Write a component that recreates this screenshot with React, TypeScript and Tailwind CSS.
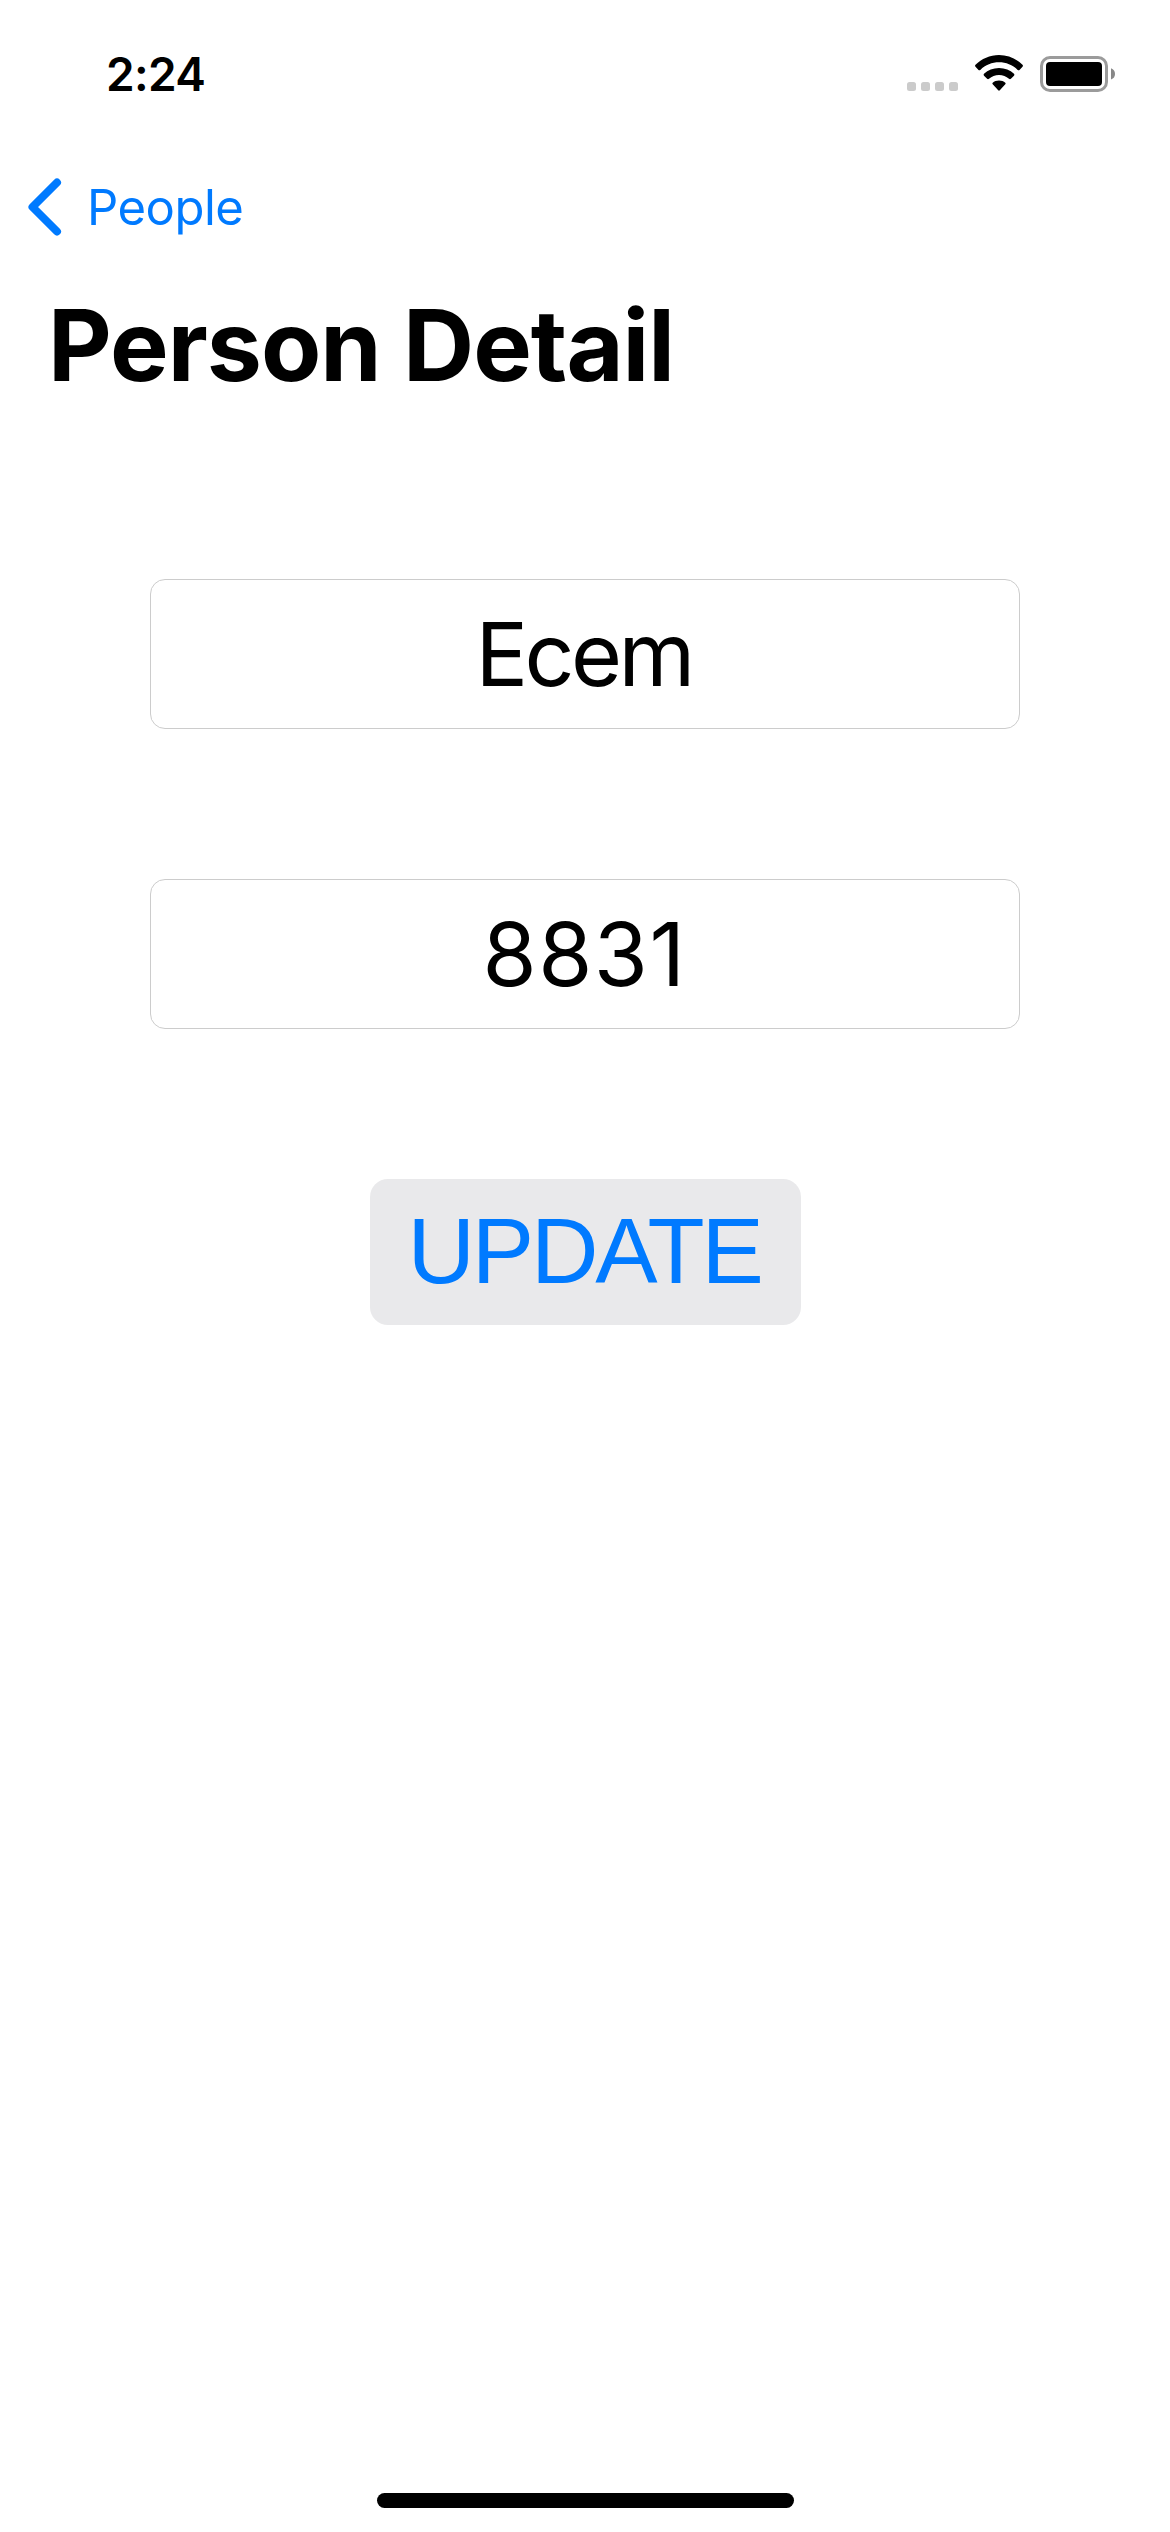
import React from "react";

function StatusBar() {
  return (
    <div className="flex h-[148px] items-center justify-between pl-[106px] pr-[55px]">
      <span className="text-[46px] font-semibold leading-none tracking-[-0.7px]">2:24</span>
      <svg width="210" height="40" viewBox="905 54 210 40" aria-label="Signal, Wi-Fi and battery">
        <g fill="#cbcbcb">
          <rect x="907" y="82" width="9" height="9" rx="2.5" />
          <rect x="921" y="82" width="9" height="9" rx="2.5" />
          <rect x="935" y="82" width="9" height="9" rx="2.5" />
          <rect x="949" y="82" width="9" height="9" rx="2.5" />
        </g>
        <g>
          <path d="M999 55 C1008 55 1016.500 58.800 1022.500 64.800 Q1023.400 65.800 1022.500 66.800 L1019.500 69.900 Q1018.600 70.700 1017.700 69.900 C1012.500 64.900 1006 62.300 999 62.300 C992 62.300 985.500 64.900 980.300 69.900 Q979.400 70.700 978.500 69.900 L975.500 66.800 Q974.600 65.800 975.500 64.800 C981.500 58.800 990 55 999 55Z" />
          <path d="M999 68 C1005 68 1010 70.200 1014 73.800 Q1014.900 74.800 1014 75.700 L1010.900 78.800 Q1010 79.600 1009 78.800 C1006.200 76.400 1002.800 75 999 75 C995.200 75 991.800 76.400 989 78.800 Q988 79.600 987.100 78.800 L984 75.700 Q983.100 74.800 984 73.800 C988 70.200 993 68 999 68Z" />
          <path d="M999 80.500 C1001.500 80.500 1003.700 81.300 1005.300 82.700 Q1006.100 83.500 1005.300 84.300 L999.800 90.300 Q999 91.100 998.200 90.300 L992.700 84.300 Q991.900 83.500 992.700 82.700 C994.300 81.300 996.500 80.500 999 80.500Z" />
        </g>
        <rect x="1041.500" y="57.500" width="65" height="33" rx="8.500" fill="none" stroke="#9b9b9b" strokeWidth="3" />
        <rect x="1046" y="62" width="56" height="24" rx="4" />
        <path d="M1111 68.300 Q1115 70 1115 74 T1111 79.500Z" fill="#888888" />
      </svg>
    </div>
  );
}

function Field({ value, spacing }: { value: string; spacing: string }) {
  return (
    <input
      readOnly
      value={value}
      className={`block h-[150px] w-[870px] rounded-[15px] border border-[#cccccc] bg-white p-0 text-center text-[87.6px] outline-none ${spacing}`}
    />
  );
}

export default function App() {
  return (
    <div className="flex h-[2532px] w-[1170px] flex-col bg-white font-['Inter',sans-serif] text-black">
      <StatusBar />
      <nav className="flex h-[117px] items-center pl-[28px] text-[#007aff]">
        <svg width="34" height="58" viewBox="0 0 34 58" fill="none" stroke="currentColor" strokeWidth="8" strokeLinecap="round" strokeLinejoin="round">
          <path d="M29 4.500 L4.500 29 L29 53.500" />
        </svg>
        <span className="ml-[25px] mt-px text-[49px] leading-none tracking-[-0.5px]">People</span>
      </nav>
      <h1 className="ml-[48px] h-[160px] text-[98.5px] font-bold leading-[162px] tracking-[-1px]">Person Detail</h1>
      <main className="mt-[154px] flex flex-1 flex-col items-center">
        <Field value="Ecem" spacing="tracking-[-3.6px] pr-[3px]" />
        <div className="mt-[150px]">
          <Field value="8831" spacing="tracking-[1.5px] pr-[1px]" />
        </div>
        <button className="mt-[150px] ml-[1px] h-[146px] w-[431px] rounded-[18px] bg-[#e9e9eb] pb-[2px] pr-[3px] font-['Liberation_Sans',sans-serif] text-[93.5px] leading-none tracking-[-3.2px] text-[#007aff]">
          UPDATE
        </button>
      </main>
      <div className="mb-[24px] ml-[377px] h-[15px] w-[417px] rounded-full bg-black" />
    </div>
  );
}
